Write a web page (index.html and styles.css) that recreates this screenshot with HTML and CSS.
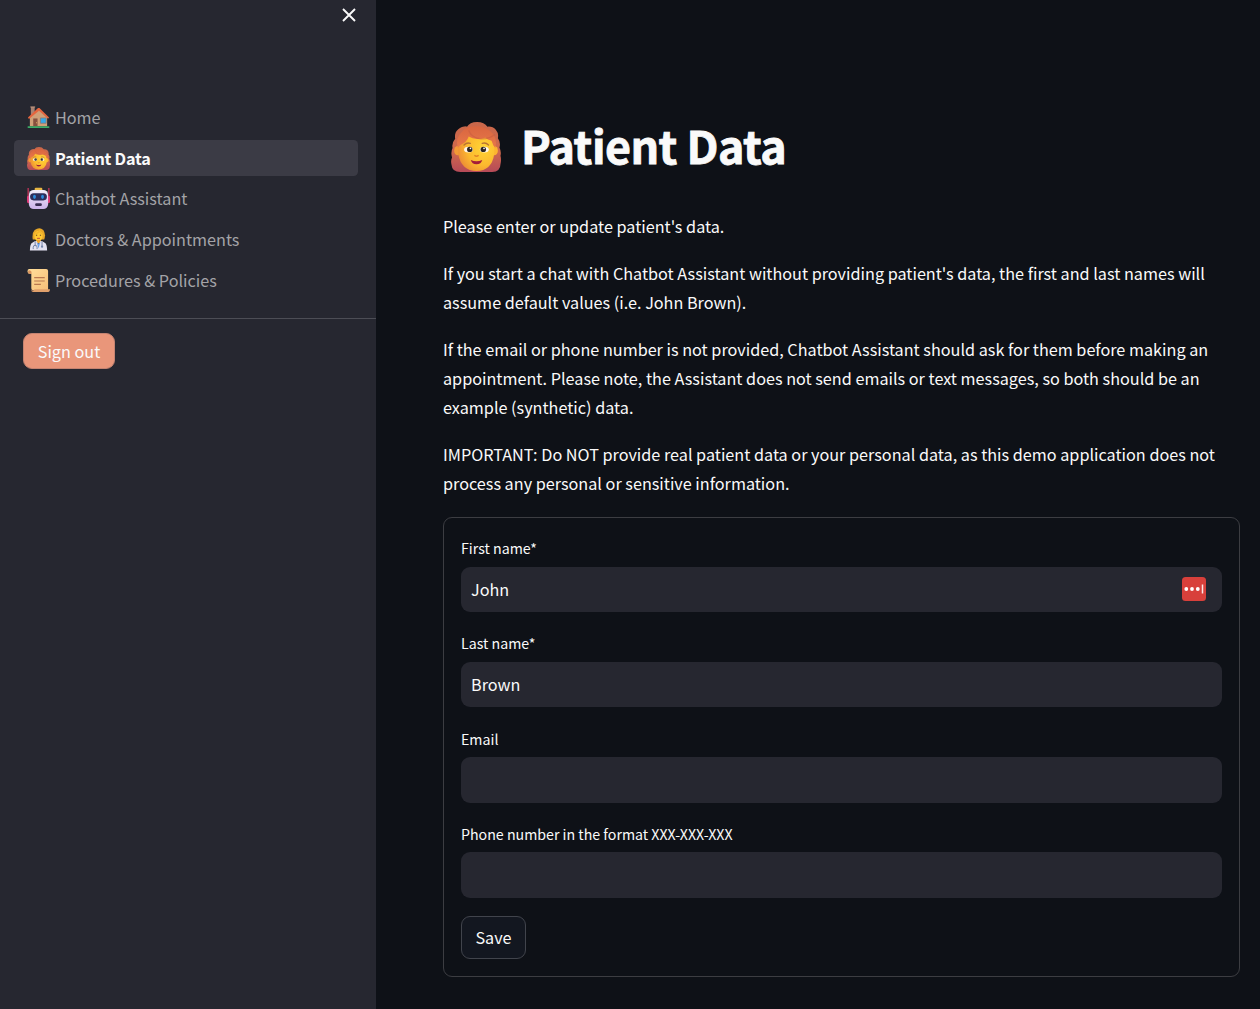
FILE: index.html
```html
<!DOCTYPE html>
<html lang="en">
<head>
<meta charset="utf-8">
<title>Patient Data</title>
<link rel="stylesheet" href="styles.css">
</head>
<body>
<svg class="defs" width="0" height="0" aria-hidden="true">
  <defs>
    <linearGradient id="hair" x1="0" y1="0" x2="0" y2="1"><stop offset="0" stop-color="#c9674a"/><stop offset=".6" stop-color="#d0694c"/><stop offset="1" stop-color="#b64a58"/></linearGradient>
    <linearGradient id="fringe" x1="0" y1="0" x2="0" y2="1"><stop offset="0" stop-color="#d9653f"/><stop offset="1" stop-color="#e8794a"/></linearGradient>
    <radialGradient id="skin" cx=".7" cy=".4" r=".75"><stop offset="0" stop-color="#ffd535"/><stop offset=".6" stop-color="#fcb92f"/><stop offset="1" stop-color="#ec8b35"/></radialGradient>
    <linearGradient id="bot" x1="0" y1="0" x2="0" y2="1"><stop offset="0" stop-color="#f2edf8"/><stop offset="1" stop-color="#cdb3ea"/></linearGradient>
    <linearGradient id="paper" x1="0" y1="0" x2="1" y2="1"><stop offset="0" stop-color="#ffdf9a"/><stop offset="1" stop-color="#f7be79"/></linearGradient>
    <symbol id="woman" viewBox="0 0 48 48">
      <path d="M15 5Q18 0 25 0t10 4.500q5-.5 8 3t2 8q3 4 1.500 9 2 4 1 8 1 4 0 8 0 7-8 7.500H9q-8 0-8.500-7-1-4 .5-7-1.500-5 .5-9-1-5 2.500-9-1-6 3-9 3-3 8-3z" fill="url(#hair)"/>
      <ellipse cx="6.500" cy="27.500" rx="3.500" ry="4.500" fill="#f39a35"/><ellipse cx="41.500" cy="27.500" rx="3.500" ry="4.500" fill="#fcb52f"/>
      <path d="M7 24Q9 10 24 10t17.500 14v7Q39 47 24.500 47T7 31z" fill="url(#skin)"/>
      <path d="M6.500 25Q4 15 10 10q4-6 13-6 10 0 15 5 7 5 4.500 16-2.500-3-3.500-7-4-1-6-3-10 3-16-1-2 6-8 8-2 2-2.500 3z" fill="url(#fringe)"/>
      <path d="M17 8q2 6 10 8 9 1 15-4" fill="none" stroke="#c65a42" stroke-width="1.200" opacity=".5"/>
      <path d="M12.500 22q2.500-2.500 6-1.500M30 20.500q3.500-1 6 1.500" fill="none" stroke="#b97432" stroke-width="1.300" stroke-linecap="round"/>
      <ellipse cx="16.800" cy="26.500" rx="4.300" ry="2.800" fill="#fff5e9"/><ellipse cx="32" cy="26.500" rx="4.300" ry="2.800" fill="#fff5e9"/>
      <circle cx="18" cy="26.300" r="2.600" fill="#2b2522"/><circle cx="31" cy="26.300" r="2.600" fill="#2b2522"/>
      <circle cx="18.700" cy="25.300" r=".8" fill="#fff"/><circle cx="31.700" cy="25.300" r=".8" fill="#fff"/>
      <path d="M22.500 32q2 2 4 0" fill="none" stroke="#e18427" stroke-width="1.400"/>
      <path d="M19 36.500q5.500 2.500 11 0-1 4-5.500 4t-5.500-4z" fill="#a41d3a"/>
    </symbol>
  </defs>
</svg>
<div class="app">
  <aside class="sidebar">
    <header class="sidebar-head">
      <button class="close" aria-label="Close">
        <svg width="14" height="14" viewBox="0 0 14 14"><path d="M1 1l12 12M13 1L1 13" stroke="#fafafa" stroke-width="1.9" fill="none"/></svg>
      </button>
    </header>
    <nav class="nav">
      <a class="nav-item">
        <svg class="icon" viewBox="0 0 24 24">
          <path d="M4 1h4v9H4z" fill="#a98272"/><path d="M3.500 1h5" stroke="#c49b82" stroke-width="1"/>
          <path d="M3 12l9-9 9 9v9H3z" fill="#d0a078"/>
          <path d="M1 12L11.500 2h1.500l10 10-1 1.300L12.500 5 2 13.500z" fill="#e5653e"/>
          <path d="M6.500 13h4.500v8.500H6.500z" fill="#87503e"/><circle cx="10" cy="17.500" r=".6" fill="#eabd67"/>
          <path d="M14 12.500h6v5.500h-6z" fill="#34a8e8" stroke="#8c7770" stroke-width=".8"/>
          <rect x=".5" y="21" width="23" height="2" rx="1" fill="#3cad68"/>
        </svg>
        <span>Home</span></a>
      <a class="nav-item active"><svg class="icon" viewBox="0 0 48 48"><use href="#woman"/></svg><span>Patient Data</span></a>
      <a class="nav-item">
        <svg class="icon" viewBox="0 0 24 24">
          <path d="M1.200 1v9M22.800 1v9" stroke="#bd3559" stroke-width="1.400"/>
          <rect x="0" y="9" width="4" height="8" rx="1.500" fill="#dc3975"/><rect x="20" y="9" width="4" height="8" rx="1.500" fill="#dc3975"/>
          <rect x="8" y=".8" width="8" height="4" rx="1.200" fill="#e7b643"/>
          <rect x="2" y="3" width="20" height="20" rx="5" fill="url(#bot)"/>
          <rect x="3.200" y="6.500" width="17.600" height="7.500" rx="3.700" fill="#2d2d58"/>
          <ellipse cx="7.800" cy="10.300" rx="1.500" ry="2.200" fill="#2c8bdd"/><ellipse cx="16.200" cy="10.300" rx="1.500" ry="2.200" fill="#2c8bdd"/>
          <rect x="8.500" y="17" width="7" height="2.700" rx="1.300" fill="#392d51"/>
        </svg>
        <span>Chatbot Assistant</span></a>
      <a class="nav-item">
        <svg class="icon" viewBox="0 0 24 24">
          <path d="M6 12Q5 5 8 2q5-3.500 9 0 3 4 1 10z" fill="#e7a728"/>
          <ellipse cx="12" cy="8.200" rx="4.300" ry="5.200" fill="#ffc832"/>
          <path d="M7.500 6q4 0 5.500-3 1 3 4 3" fill="none" stroke="#f2b52c" stroke-width="1.500"/>
          <path d="M9.300 7.500h1.300M13.400 7.500h1.300" stroke="#66451f" stroke-width="1.100"/><path d="M10.500 10.800h3" stroke="#b43b37" stroke-width=".9"/>
          <path d="M9.500 12.500h5V16h-5z" fill="#f0a32c"/>
          <path d="M3 23.500q0-7.500 3-8.500 2-1.500 4-1.500l2 4 2-4q2 0 4 1.500 3 1 3 8.500z" fill="#e4e2f1"/>
          <path d="M10 14.500l2 7 2-7-2 2z" fill="#6d9fe8"/>
          <path d="M8.500 14v5M6.500 22v-2q0-2 2-2t2 2v2M15.700 14v5" fill="none" stroke="#66779e" stroke-width=".9"/><circle cx="15.700" cy="19.500" r="1.200" fill="#7688ac"/>
        </svg>
        <span>Doctors &amp; Appointments</span></a>
      <a class="nav-item">
        <svg class="icon" viewBox="0 0 24 24">
          <path d="M2.500 0H20q2 0 2 2v20H6q-1.500 0-1.500-2V5H3Q.5 5 .5 2.500T2.500 0z" fill="url(#paper)"/>
          <path d="M3 1.500q2 0 1.800 3.500H3Q1 5 1 3t2-1.500z" fill="#d9945f"/>
          <path d="M8 21h16q0 3-3 3H6.500q-2 0-2-2 2 1 3.500-1z" fill="#e1a06b"/>
          <path d="M7.500 9h11M7.500 12.500h11M7.500 16h7" stroke="#b97950" stroke-width="1.200"/>
        </svg>
        <span>Procedures &amp; Policies</span></a>
    </nav>
    <div class="sidebar-body"><button class="btn sign-out">Sign out</button></div>
  </aside>
  <main class="main">
    <h1 class="title"><svg class="title-icon" viewBox="0 0 48 48"><use href="#woman"/></svg><span class="title-text">Patient Data</span></h1>
    <div class="intro">
      <p>Please enter or update patient's data.</p>
      <p>If you start a chat with Chatbot Assistant without providing patient's data, the first and last names will<br>assume default values (i.e. John Brown).</p>
      <p>If the email or phone number is not provided, Chatbot Assistant should ask for them before making an<br>appointment. Please note, the Assistant does not send emails or text messages, so both should be an<br>example (synthetic) data.</p>
      <p>IMPORTANT: Do NOT provide real patient data or your personal data, as this demo application does not<br>process any personal or sensitive information.</p>
    </div>
    <form class="form">
      <label class="field"><span class="label">First name*</span>
        <span class="control"><input class="input" type="text" value="John">
          <svg class="autofill" viewBox="0 0 24 24"><rect width="24" height="24" rx="3.500" fill="#d8403b"/><circle cx="4.300" cy="12" r="1.900" fill="#fff"/><circle cx="10" cy="12" r="1.900" fill="#fff"/><circle cx="15.800" cy="12" r="1.900" fill="#fff"/><path d="M20.500 7.500v9" stroke="#ffe6e4" stroke-width="1.500"/></svg></span></label>
      <label class="field"><span class="label">Last name*</span><span class="control"><input class="input" type="text" value="Brown"></span></label>
      <label class="field"><span class="label">Email</span><span class="control"><input class="input" type="text"></span></label>
      <label class="field"><span class="label">Phone number in the format XXX-XXX-XXX</span><span class="control"><input class="input" type="text"></span></label>
      <button class="btn save" type="button">Save</button>
    </form>
  </main>
</div>
</body>
</html>
```
FILE: styles.css
```css
* { box-sizing: border-box; }
body {
  margin: 0;
  background: #0e1117;
  color: #fafafa;
  font-family: "Noto Sans CJK SC", "Noto Sans", sans-serif;
  font-size: 16.22px;
  line-height: 29px;
}
.defs { position: absolute; }
.app { display: flex; height: 1009px; overflow: hidden; }

.sidebar { width: 376px; flex: none; background: #262730; }
.sidebar-head { height: 99px; display: flex; justify-content: flex-end; align-items: flex-start; padding: 8px 20px 0 0; }
.close { border: 0; background: none; padding: 0; width: 14px; height: 14px; display: flex; }
.nav { display: flex; flex-direction: column; gap: 4.75px; padding: 0 18px 24px 14px; height: 220px; border-bottom: 1px solid #4c4d55; }
.nav-item { display: flex; align-items: center; gap: 5px; height: 36px; flex: none; padding-left: 13px; border-radius: 4.500px; color: #a3a3a7; }
.nav-item.active { padding-top: 1.5px; background: #3b3b45; color: #fafafa; font-weight: 700; letter-spacing: -0.23px; }
.icon { width: 23px; height: 23px; flex: none; }
.sidebar-body { padding: 14px 23px; }

.btn { display: flex; align-items: center; justify-content: center; padding: 0; font: inherit; color: #fafafa; border-radius: 9px; }
.sign-out { width: 92px; height: 36px; background: #e9967a; border: 1px solid #c48371; }
.save { width: 65px; height: 43px; margin-top: 18px; background: #131720; border: 1px solid #41444c; }

.main { flex: 1; padding: 117px 20px 0 67px; }
.title { display: flex; align-items: center; gap: 20px; height: 60px; margin: 0; padding-left: 8px; font-size: 44.800px; font-weight: 700; line-height: 60px; }
.title-icon { width: 50px; height: 50px; }
.title-text { padding-bottom: 4px; letter-spacing: -0.55px; -webkit-text-stroke: 0.8px #fafafa; }
.intro { padding-top: 35px; display: flex; flex-direction: column; gap: 18px; white-space: nowrap; }
.intro p { margin: 0; }

.form { margin-top: 19px; height: 460px; padding: 17px; border: 1px solid #3c3d42; border-radius: 9px; }
.field { display: block; }
.field + .field { margin-top: 18.300px; }
.label { display: block; height: 31.500px; line-height: 26px; font-size: 14.200px; }
.control { display: flex; align-items: center; height: 45.500px; padding-right: 16.500px; border-radius: 9px; background: #262730; }
.input { flex: 1; min-width: 0; height: 44px; margin-bottom: 1.500px; padding: 0 10px; border: 0; outline: 0; background: none; color: #fafafa; font: inherit; }
.autofill { width: 24px; height: 24px; }
```
